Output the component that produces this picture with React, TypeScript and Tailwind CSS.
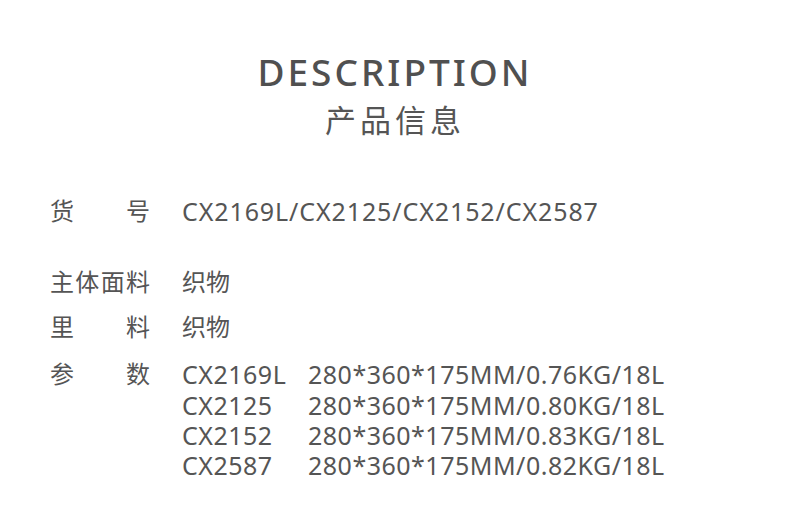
export default function App() {
  const params = [
    ["CX2169L", "280*360*175MM/0.76KG/18L"],
    ["CX2125", "280*360*175MM/0.80KG/18L"],
    ["CX2152", "280*360*175MM/0.83KG/18L"],
    ["CX2587", "280*360*175MM/0.82KG/18L"],
  ];
  const font = { fontFamily: '"Noto Sans", "Noto Sans CJK SC", sans-serif' };

  return (
    <div className="w-[790px] h-[526px] bg-white text-[#555]" style={font}>
      <div className="flex flex-col items-center pt-[50px]">
        <div className="text-[37px] leading-[44px] tracking-[3px] font-medium text-[#505050]">DESCRIPTION</div>
        <div className="text-[31px] leading-[40px] tracking-[4px] mt-[6px]">产品信息</div>
      </div>

      <div className="pl-[50px] pt-[54px] text-[24px] leading-[30px]">
        <div className="flex items-center h-[34px]">
          <span className="w-[100px] flex justify-between"><span>货</span><span>号</span></span>
          <span className="ml-[32px] text-[25px] tracking-[0.9px]">CX2169L/CX2125/CX2152/CX2587</span>
        </div>
        <div className="flex items-center h-[34px] mt-[37px]">
          <span className="w-[100px] flex justify-between"><span>主</span><span>体</span><span>面</span><span>料</span></span>
          <span className="ml-[32px]">织物</span>
        </div>
        <div className="flex items-center h-[34px] mt-[11px]">
          <span className="w-[100px] flex justify-between"><span>里</span><span>料</span></span>
          <span className="ml-[32px]">织物</span>
        </div>
        <div className="flex mt-[15px]">
          <span className="w-[100px] h-[30px] flex justify-between items-center"><span>参</span><span>数</span></span>
          <div className="ml-[32px] flex flex-col text-[25px] leading-[28px] tracking-[0.5px]">
            {params.map(([code, spec]) => (
              <div key={code} className="flex items-center h-[30.4px]">
                <span className="w-[126px]">{code}</span>
                <span>{spec}</span>
              </div>
            ))}
          </div>
        </div>
      </div>
    </div>
  );
}
